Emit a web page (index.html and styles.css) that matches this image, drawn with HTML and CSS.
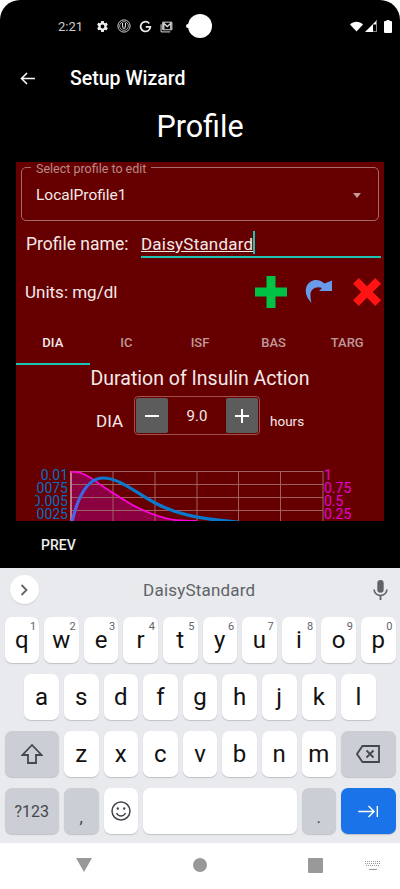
FILE: index.html
```html
<!DOCTYPE html>
<html lang="en">
<head>
  <meta charset="UTF-8">
  <meta name="viewport" content="width=device-width, initial-scale=1.0">
  <title>Setup Wizard</title>
  <link rel="stylesheet" href="styles.css">
</head>
<body>
  <div class="screen">
    <div class="statusbar">
      <span class="clock">2:21</span>
      <svg class="st-icon st-gear" viewBox="0 0 24 24"><path d="M19.4 13c.1-.3.1-.7.1-1s0-.7-.1-1l2.1-1.6c.2-.1.2-.4.1-.6l-2-3.5c-.1-.2-.4-.3-.6-.2l-2.5 1c-.5-.4-1.1-.7-1.7-1l-.4-2.7c0-.2-.2-.4-.5-.4h-4c-.2 0-.4.2-.5.4l-.4 2.7c-.6.2-1.1.6-1.7 1l-2.5-1c-.2-.1-.5 0-.6.2l-2 3.5c-.1.2-.1.5.1.6L4.5 11c0 .3-.1.7-.1 1s0 .7.1 1l-2.1 1.6c-.2.1-.2.4-.1.6l2 3.5c.1.2.4.3.6.2l2.5-1c.5.4 1.1.7 1.7 1l.4 2.7c0 .2.2.4.5.4h4c.2 0 .4-.2.5-.4l.4-2.7c.6-.2 1.1-.6 1.7-1l2.5 1c.2.1.5 0 .6-.2l2-3.5c.1-.2.1-.5-.1-.6zM12 15.5a3.5 3.5 0 1 1 0-7 3.5 3.5 0 0 1 0 7z"/></svg>
      <svg class="st-icon st-circle" viewBox="0 0 24 24" fill="none" stroke="#ddd"><circle cx="12" cy="12" r="10.5" stroke-width="1.6"/><circle cx="12" cy="12" r="7.5" stroke-width="1.2"/><path d="M9.5 7v5l1.500 5M14.500 7v5l-1.500 5" stroke-width="1.8"/></svg>
      <svg class="st-icon st-g" viewBox="0 0 24 24" fill="none" stroke="#eee" stroke-width="3.2"><path d="M19 6.500A9 9 0 1 0 21 12.500h-8.500"/></svg>
      <svg class="st-icon st-mail" viewBox="0 0 24 24" fill="none" stroke="#ddd" stroke-width="1.8"><path d="M5 4h17v14H5z"/><path d="M2 8v14h17"/><path d="M7 17V6l6.500 6L20 6v11" stroke-width="2.4"/></svg>
      <span class="cam"></span>
      <span class="st-right">
        <svg class="st-wifi" viewBox="0 0 16 12"><path d="M0 3.500C4.500-1 11.500-1 16 3.500L8 12z"/></svg>
        <svg class="st-signal" viewBox="0 0 12 12"><path d="M0 12L12 0v12z" fill="#fff"/><path d="M8 4.500h3v7H8z" fill="#000"/><path d="M11.500 1v11" stroke="#888"/></svg>
        <svg class="st-batt" viewBox="0 0 8 13"><path d="M2.500 0h3v1H7a1 1 0 0 1 1 1v10a1 1 0 0 1-1 1H1a1 1 0 0 1-1-1V2a1 1 0 0 1 1-1h1.500z"/></svg>
      </span>
    </div>

    <div class="toolbar">
      <svg class="back" viewBox="0 0 16 14" fill="none" stroke="#fff" stroke-width="1.6"><path d="M16 7H1.500M7.500 1l-6 6 6 6"/></svg>
      <span class="toolbar-title">Setup Wizard</span>
    </div>
    <h1 class="page-title">Profile</h1>

    <main class="panel">
      <div class="select-box">
        <span class="select-label">Select profile to edit</span>
        <span class="select-value">LocalProfile1</span>
        <span class="select-arrow"></span>
      </div>

      <div class="name-row">
        <span class="name-label">Profile name:</span>
        <div class="name-input"><span class="name-text">DaisyStandard</span><span class="caret"></span></div>
      </div>

      <div class="units-row">
        <span class="units">Units: mg/dl</span>
        <svg class="ic-plus" viewBox="0 0 32 32"><path d="M11.500 0h9v11.500H32v9H20.500V32h-9V20.500H0v-9h11.500z" fill="#00c244"/></svg>
        <svg class="ic-redo" viewBox="0 0 28 28"><path d="M6.500 25C1.500 20-.5 14 1.500 8.500 4.500 1.500 13-.5 19.500 5.500L27 2.500V13H14L17 10C13 8.500 8.500 9.500 6 13.500 5 16.500 5.500 21 6.500 25z" fill="#6a9bea"/></svg>
        <svg class="ic-del" viewBox="0 0 29 29"><path d="M6 0l8.500 8.500L23 0l6 6-8.500 8.500L29 23l-6 6-8.500-8.500L6 29l-6-6 8.500-8.500L0 6z" fill="#ff1414"/></svg>
      </div>

      <div class="tabs">
        <span class="tab tab-active">DIA</span>
        <span class="tab">IC</span>
        <span class="tab">ISF</span>
        <span class="tab">BAS</span>
        <span class="tab">TARG</span>
      </div>

      <div class="dia-title">Duration of Insulin Action</div>
      <div class="dia-row">
        <span class="dia-label">DIA</span>
        <div class="stepper">
          <span class="step-btn"><svg viewBox="0 0 14 14" fill="#fff"><path d="M0 6h14v2H0z"/></svg></span>
          <span class="step-value">9.0</span>
          <span class="step-btn"><svg viewBox="0 0 14 14" fill="#fff"><path d="M0 6h6V0h2v6h6v2H8v6H6V8H0z"/></svg></span>
        </div>
        <span class="dia-unit">hours</span>
      </div>

      <svg class="graph" viewBox="0 0 368 60">
        <defs>
          <linearGradient id="iob" x1="0" y1="0" x2="1" y2="0">
            <stop offset="0" stop-color="#5560e8"/>
            <stop offset="0.2" stop-color="#0a78cc"/>
            <stop offset="1" stop-color="#0a78cc"/>
          </linearGradient>
          <clipPath id="labelclip"><path d="M19 0H368V60H19z"/></clipPath>
        </defs>
        <path d="M55 11C70 10 76 19 97 32S122 48 139 54 165 60 181 60H55z" fill="#8a0040"/>
        <g class="grid-lines">
          <path d="M55 10.500H307M55 23.500H307M55 36.500H307M55 49.500H307"/>
          <path d="M97 10V60M139 10V60M181 10V60M222.500 10V60M264.500 10V60M307 10V60"/>
        </g>
        <path class="axis" d="M55 10V60"/>
        <path class="curve-act" d="M55 11C70 10 76 19 97 32S122 48 139 54 165 60 181 60"/>
        <path class="curve-iob" d="M56 61C62 35 72 17 87 17 104 17 120 32 139 42 158 52 180 58 222 61" stroke="url(#iob)"/>
        <g class="labels-left" clip-path="url(#labelclip)">
          <text x="52" y="18.500">0.01</text>
          <text x="52" y="31.500">0.0075</text>
          <text x="52" y="44.500">0.005</text>
          <text x="52" y="57.500">0.0025</text>
        </g>
        <g class="labels-right">
          <text x="308" y="18.500">1</text>
          <text x="308" y="31.500">0.75</text>
          <text x="308" y="44.500">0.5</text>
          <text x="308" y="57.500">0.25</text>
        </g>
      </svg>
    </main>

    <div class="wizard-nav"><span class="prev">PREV</span></div>

    <div class="keyboard">
      <div class="strip">
        <span class="strip-btn"><svg viewBox="0 0 8 12" fill="none" stroke="#5f6368" stroke-width="1.8"><path d="M1.500 1l5 5-5 5"/></svg></span>
        <span class="strip-word">DaisyStandard</span>
        <svg class="mic" viewBox="0 0 16 22" fill="#5f6368"><path d="M8 0a3.500 3.500 0 0 0-3.500 3.500v7a3.500 3.500 0 0 0 7 0v-7A3.500 3.500 0 0 0 8 0z"/><path d="M1 10.500c0 3.700 3 6.500 7 6.500s7-2.800 7-6.500" fill="none" stroke="#5f6368" stroke-width="1.8"/><path d="M7 16.500h2V22H7z"/></svg>
      </div>
      <div class="keys">
        <span class="key">q<i>1</i></span>
        <span class="key">w<i>2</i></span>
        <span class="key">e<i>3</i></span>
        <span class="key">r<i>4</i></span>
        <span class="key">t<i>5</i></span>
        <span class="key">y<i>6</i></span>
        <span class="key">u<i>7</i></span>
        <span class="key">i<i>8</i></span>
        <span class="key">o<i>9</i></span>
        <span class="key">p<i>0</i></span>

        <span class="key key-a">a</span>
        <span class="key">s</span>
        <span class="key">d</span>
        <span class="key">f</span>
        <span class="key">g</span>
        <span class="key">h</span>
        <span class="key">j</span>
        <span class="key">k</span>
        <span class="key">l</span>

        <span class="key key-fn key-wide"><svg class="ic-shift" viewBox="0 0 22 22" fill="none" stroke="#44474b" stroke-width="1.8"><path d="M11 2L1.500 12H7v8h8v-8h5.500z"/></svg></span>
        <span class="key">z</span>
        <span class="key">x</span>
        <span class="key">c</span>
        <span class="key">v</span>
        <span class="key">b</span>
        <span class="key">n</span>
        <span class="key">m</span>
        <span class="key key-fn key-wide"><svg class="ic-bksp" viewBox="0 0 24 18" fill="none" stroke="#44474b" stroke-width="1.8"><path d="M6.500 1H23v16H6.500L1 9z"/><path d="M10.500 5.500l7 7M17.500 5.500l-7 7"/></svg></span>

        <span class="key key-fn key-wide key-sym">?123</span>
        <span class="key key-fn key-punct">,</span>
        <span class="key"><svg class="ic-emoji" viewBox="0 0 20 20" fill="none" stroke="#44474b" stroke-width="1.5"><circle cx="10" cy="10" r="9"/><path d="M5.500 12c1 2 2.500 3 4.500 3s3.500-1 4.500-3"/><circle cx="6.800" cy="7.500" r="1.200" fill="#44474b" stroke="none"/><circle cx="13.200" cy="7.500" r="1.200" fill="#44474b" stroke="none"/></svg></span>
        <span class="key key-space"></span>
        <span class="key key-fn key-punct">.</span>
        <span class="key key-enter key-wide"><svg class="ic-tab" viewBox="0 0 22 14" fill="none" stroke="#fff" stroke-width="1.5"><path d="M0 7h17M11 1l6 6-6 6M20.500 1v12"/></svg></span>
      </div>
    </div>

    <div class="sysnav">
      <span class="nav-back"></span>
      <span class="nav-home"></span>
      <span class="nav-recent"></span>
      <svg class="nav-kbd" viewBox="0 0 16 9" fill="none" stroke="#999"><path d="M0 .5h16M0 2.500h16M1 4.500h14" stroke-dasharray="1 1"/><path d="M4 8.500h8"/></svg>
    </div>
  </div>
</body>
</html>
```

FILE: styles.css
```css
* {
  box-sizing: border-box;
  margin: 0;
  padding: 0;
}
html, body {
  background: #fff;
}
body {
  font-family: Roboto, "Noto Sans", sans-serif;
  width: 400px;
  height: 889px;
  overflow: hidden;
}
.screen {
  position: relative;
  display: flex;
  flex-direction: column;
  height: 889px;
  background: #000;
  border-radius: 20px 20px 0 0;
  overflow: hidden;
}

/* status bar */
.statusbar {
  display: flex;
  align-items: center;
  height: 52px;
  padding-left: 58px;
  flex-shrink: 0;
}
.clock {
  color: #ccc;
  font-size: 13px;
  width: 38px;
}
.st-icon {
  width: 13px;
  height: 13px;
  fill: #eee;
  margin-right: 8px;
}
.st-circle {
  fill: none;
  width: 14px;
  height: 14px;
}
.st-g {
  fill: none;
}
.st-mail {
  fill: none;
}
.cam {
  position: relative;
  width: 24px;
  height: 24px;
  border-radius: 50%;
  background: #fff;
  margin-left: 7px;
}
.cam::before {
  content: "";
  position: absolute;
  left: -2px;
  top: 10px;
  width: 4px;
  height: 4px;
  border-radius: 50%;
  background: #fff;
}
.st-right {
  display: flex;
  align-items: center;
  margin-left: auto;
  margin-right: 8px;
}
.st-wifi {
  width: 13px;
  height: 11px;
  fill: #fff;
  margin-right: 2px;
}
.st-signal {
  width: 12px;
  height: 12px;
  margin-right: 7px;
}
.st-batt {
  width: 8px;
  height: 13px;
  fill: #fff;
}

/* toolbar */
.toolbar {
  display: flex;
  align-items: center;
  height: 50px;
  padding: 2px 0 0 20px;
  flex-shrink: 0;
}
.back {
  width: 15px;
  height: 13px;
}
.toolbar-title {
  color: #fff;
  font-size: 19.5px;
  font-weight: 500;
  margin-left: 35px;
}
.page-title {
  color: #fff;
  font-size: 30.5px;
  font-weight: 400;
  text-align: center;
  height: 50px;
  line-height: 50px;
  margin-bottom: 10px;
  flex-shrink: 0;
}

/* maroon panel */
.panel {
  margin: 0 16px;
  height: 359px;
  background: #660000;
  overflow: hidden;
  flex-shrink: 0;
  color: #f3e9e9;
}
.select-box {
  position: relative;
  display: flex;
  align-items: center;
  justify-content: space-between;
  height: 54px;
  margin: 5px 5px 0;
  padding: 2px 17px 0 14px;
  border: 1px solid #a86a6a;
  border-radius: 5px;
}
.select-label {
  position: absolute;
  top: -6px;
  left: 9px;
  padding: 0 5px;
  background: #660000;
  color: #b98a8a;
  font-size: 12.5px;
  line-height: 14px;
}
.select-value {
  font-size: 15.5px;
}
.select-arrow {
  border-left: 4.5px solid transparent;
  border-right: 4.5px solid transparent;
  border-top: 5px solid #c49a9a;
}
.name-row {
  display: flex;
  align-items: flex-end;
  height: 37px;
  padding-left: 10px;
}
.name-label {
  font-size: 17.5px;
  width: 115px;
  padding-bottom: 4px;
}
.name-input {
  display: flex;
  align-items: flex-end;
  width: 240px;
  height: 30px;
  border-bottom: 2px solid #1cc4b8;
  padding-bottom: 2px;
}
.name-text {
  font-size: 17px;
  line-height: 20px;
  letter-spacing: 0.2px;
  text-decoration: underline;
}
.caret {
  width: 2px;
  height: 23px;
  background: #1cc4b8;
}
.units-row {
  display: flex;
  align-items: center;
  height: 61px;
  padding: 7px 0 0 9px;
}
.units {
  font-size: 17px;
  width: 230px;
}
.ic-plus {
  width: 32px;
  height: 32px;
  margin-right: 18px;
}
.ic-redo {
  width: 28px;
  height: 28px;
  margin-right: 20px;
}
.ic-del {
  width: 28px;
  height: 28px;
}
.tabs {
  display: grid;
  grid-template-columns: repeat(5, 1fr);
  height: 46px;
}
.tab {
  display: flex;
  align-items: center;
  justify-content: center;
  font-size: 13px;
  font-weight: 500;
  color: #bf9999;
  padding-top: 2px;
  border-bottom: 2px solid transparent;
}
.tab-active {
  color: #f3e9e9;
  border-bottom-color: #1cc4b8;
}
.dia-title {
  font-size: 19.5px;
  text-align: center;
  line-height: 28px;
}
.dia-row {
  display: flex;
  align-items: center;
  height: 39px;
  margin-top: 3px;
  padding-left: 80px;
}
.dia-label {
  font-size: 17px;
  width: 38px;
  padding-top: 11px;
}
.stepper {
  display: flex;
  align-items: center;
  justify-content: space-between;
  width: 126px;
  height: 39px;
  padding: 1px;
  border: 1px solid #a05050;
  border-radius: 4px;
}
.step-btn {
  display: flex;
  align-items: center;
  justify-content: center;
  width: 32px;
  height: 35px;
  background: #5c5c5c;
  border-radius: 2px;
}
.step-btn svg {
  width: 14px;
  height: 14px;
}
.step-value {
  font-size: 15px;
}
.dia-unit {
  font-size: 13.5px;
  margin-left: 10px;
  padding-top: 11px;
}

/* graph */
.graph {
  display: block;
  width: 368px;
  height: 60px;
  margin-top: 26px;
}
.grid-lines path {
  fill: none;
  stroke: #a06060;
  stroke-width: 1;
}
.axis {
  stroke: #d9a0b0;
  stroke-width: 1.5;
  fill: none;
}
.curve-act {
  fill: none;
  stroke: #ff00e0;
  stroke-width: 1.8;
}
.curve-iob {
  fill: none;
  stroke-width: 3.2;
}
.labels-left text {
  fill: #0a6cc0;
  font-size: 14px;
  text-anchor: end;
}
.labels-right text {
  fill: #e600d8;
  font-size: 14px;
}

/* wizard nav */
.wizard-nav {
  display: flex;
  align-items: center;
  height: 47px;
  padding-left: 41px;
  flex-shrink: 0;
}
.prev {
  color: #eee;
  font-size: 14px;
  font-weight: 500;
}

/* keyboard */
.keyboard {
  height: 275px;
  background: #e8eaed;
  flex-shrink: 0;
}
.strip {
  display: flex;
  align-items: center;
  height: 49px;
  padding: 0 12px 6px 9.5px;
}
.strip-btn {
  display: flex;
  align-items: center;
  justify-content: center;
  width: 29px;
  height: 29px;
  background: #fff;
  border-radius: 50%;
  box-shadow: 0 1px 1px #cfd1d4;
}
.strip-btn svg {
  width: 8px;
  height: 12px;
}
.strip-word {
  flex: 1;
  text-align: center;
  font-size: 17px;
  color: #5f6368;
  letter-spacing: 0.2px;
  padding-right: 13px;
}
.mic {
  width: 15px;
  height: 20px;
}
.keys {
  display: grid;
  grid-template-columns: repeat(20, 1fr);
  grid-auto-rows: 46px;
  column-gap: 5px;
  row-gap: 11px;
  padding: 0 4.5px;
}
.key {
  position: relative;
  grid-column: span 2;
  display: flex;
  align-items: center;
  justify-content: center;
  background: #fff;
  border-radius: 7px;
  box-shadow: 0 1px 1px #bfc1c5;
  color: #111;
  font-size: 24px;
}
.key i {
  position: absolute;
  top: 3px;
  right: 3px;
  font-style: normal;
  font-size: 11px;
  color: #5f6368;
}
.key-a {
  grid-column: 2 / span 2;
}
.key-wide {
  grid-column: span 3;
}
.key-space {
  grid-column: span 8;
}
.key-fn {
  background: #ccced5;
}
.key-sym {
  font-size: 16px;
  color: #44474b;
}
.key-punct {
  font-size: 17px;
  color: #3c3f43;
  padding-top: 12px;
}
.key-enter {
  background: #1a73e8;
}
.ic-shift {
  width: 22px;
  height: 22px;
}
.ic-bksp {
  width: 24px;
  height: 18px;
}
.ic-emoji {
  width: 20px;
  height: 20px;
}
.ic-tab {
  width: 21px;
  height: 13px;
}

/* system nav */
.sysnav {
  position: relative;
  flex: 1;
  background: #fff;
}
.nav-back {
  position: absolute;
  left: 76px;
  top: 15px;
  border-left: 8.5px solid transparent;
  border-right: 8.5px solid transparent;
  border-top: 14px solid #999;
}
.nav-home {
  position: absolute;
  left: 193px;
  top: 15px;
  width: 14px;
  height: 14px;
  border-radius: 50%;
  background: #999;
}
.nav-recent {
  position: absolute;
  left: 308px;
  top: 15px;
  width: 15px;
  height: 15px;
  border-radius: 1px;
  background: #999;
}
.nav-kbd {
  position: absolute;
  left: 365px;
  top: 18px;
  width: 16px;
  height: 9px;
}
```
